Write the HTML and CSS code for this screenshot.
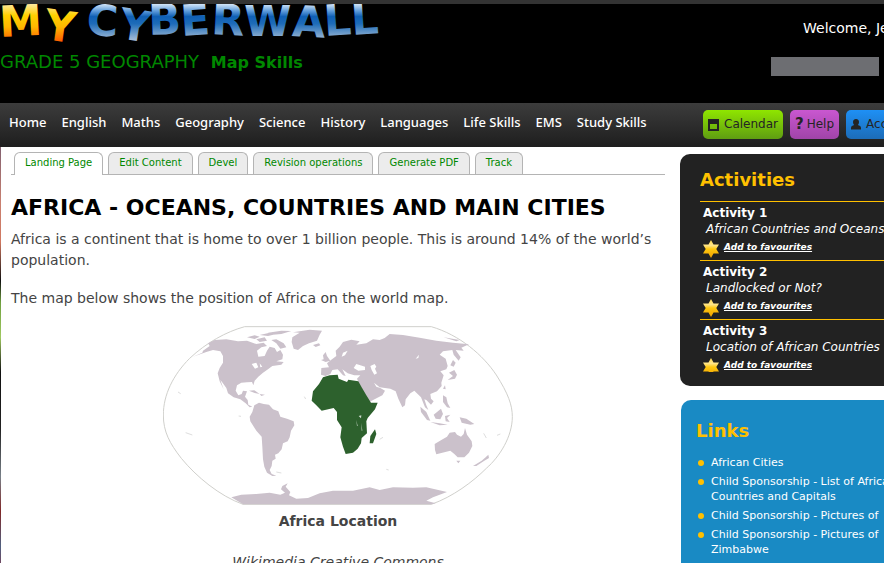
FILE: index.html
```html
<!DOCTYPE html>
<html lang="en">
<head>
<meta charset="utf-8">
<title>Africa - Oceans, Countries and Main Cities</title>
<link rel="stylesheet" href="styles.css">
</head>
<body>
<div class="page">
  <header class="header">
    <div class="brand">
      <a class="logo" href="#" aria-label="My Cyberwall">
        <svg width="384" height="43" viewBox="0 4 384 43">
          <defs>
            <linearGradient id="fire" gradientUnits="userSpaceOnUse" x1="0" y1="4" x2="0" y2="42"><stop offset="0" stop-color="#ffe9a0"/><stop offset=".3" stop-color="#ffd000"/><stop offset=".6" stop-color="#ffb800"/><stop offset="1" stop-color="#ff5a00"/></linearGradient>
            <linearGradient id="ice" gradientUnits="userSpaceOnUse" x1="0" y1="4" x2="0" y2="40"><stop offset="0" stop-color="#d4e6f8"/><stop offset=".2" stop-color="#5c9ada"/><stop offset=".35" stop-color="#0f5fb4"/><stop offset=".55" stop-color="#1e6cb8"/><stop offset="1" stop-color="#a4bcd6"/></linearGradient>
          </defs>
          <text class="logo-text" x="0" y="37 39" rotate="-3 8" fill="url(#fire)">MY</text>
          <text class="logo-text" x="86" y="35 38 35 36 34 36 36 36 35" rotate="3 9 -2 -4 3 0 3 -4 -4" fill="url(#ice)">CYBERWALL</text>
        </svg>
      </a>
      <p class="course">GRADE 5 GEOGRAPHY <strong>Map Skills</strong></p>
    </div>
    <div class="account">
      <p class="welcome">Welcome, Je</p>
      <input class="search" type="search" aria-label="Search">
    </div>
  </header>
  <div class="navbar">
    <nav class="menu">
      <a href="#">Home</a><a href="#">English</a><a href="#">Maths</a><a href="#">Geography</a><a href="#">Science</a><a href="#">History</a><a href="#">Languages</a><a href="#">Life Skills</a><a href="#">EMS</a><a href="#">Study Skills</a>
    </nav>
    <div class="tools">
      <a class="tool green" href="#"><svg width="11" height="12" viewBox="0 0 11 12"><path fill="#242424" fill-rule="evenodd" d="M0 0H11V12H0ZM2 5V10H9V5Z"/></svg>Calendar</a>
      <a class="tool purple" href="#"><b>?</b>Help</a>
      <a class="tool blue" href="#"><svg width="10" height="11" viewBox="0 0 10 11"><path fill="#242424" d="M5 0C7 0 8 1.400 8 3C8 4.500 7.300 5.500 6.800 6C8.500 6.500 10 7.200 10 9V10.500H0V9C0 7.200 1.500 6.500 3.200 6C2.700 5.500 2 4.500 2 3C2 1.400 3 0 5 0Z"/></svg>Account</a>
    </div>
  </div>
  <div class="body">
    <main class="main">
      <nav class="tabs">
        <a class="tab active" href="#">Landing Page</a><a class="tab" href="#">Edit Content</a><a class="tab" href="#">Devel</a><a class="tab" href="#">Revision operations</a><a class="tab" href="#">Generate PDF</a><a class="tab" href="#">Track</a>
      </nav>
      <h1>AFRICA - OCEANS, COUNTRIES AND MAIN CITIES</h1>
      <p>Africa is a continent that is home to over 1 billion people. This is around 14% of the world’s population.</p>
      <p>The map below shows the position of Africa on the world map.</p>
      <figure>
        <svg class="map" viewBox="10 18 1050 540" role="img" aria-label="World map with Africa highlighted">
          <path fill="#fff" stroke="#d0d0cc" stroke-width="3" d="M255 20H815C900 45 970 105 1010 165C1045 220 1058 255 1058 290C1058 350 1020 410 980 445C940 485 880 530 815 553H250C180 528 110 470 65 415C30 370 11 335 11 285C11 225 40 165 90 115C140 68 200 35 255 20Z"/>
          <g fill="#cbc1cb">
            <path d="M130 92L150 78L145 70L165 60L200 58L235 64L262 62L290 72L312 68L322 78L305 82L292 92L296 110L315 108L322 92L330 80L345 84L352 96L362 90L370 104L368 118L350 124L372 126L365 134L338 138L325 148L310 158L296 170L285 182L281 196L277 186L262 187L245 188L232 196L228 212L236 226L246 222L250 212L262 214L256 230L264 240L266 254L278 260L270 262L258 250L242 238L222 232L205 220L200 204L187 186L182 180L192 208L180 184L174 160L180 144L190 128L190 108L182 94L160 90L140 96L100 110L128 98Z"/>
            <path d="M262 52L285 46L300 50L285 57ZM290 58L315 52L322 62L300 66ZM300 45L330 38L350 42L325 48ZM325 38L365 32L395 33L365 42L340 44ZM335 60L350 58L372 70L380 82L362 86L350 70ZM398 52L420 38L400 37L450 29L487 32L480 44L472 62L448 70L430 78L415 90L402 86L396 66ZM460 75L478 70L482 76L468 81ZM268 212L284 211L300 222L285 219ZM300 222L316 224L305 228Z"/>
            <path d="M284 256L298 248L312 252L328 254L340 268L356 274L362 290L382 296L402 304L404 316L394 332L390 352L384 364L370 370L366 388L356 400L346 404L348 416L338 422L336 438L330 450L336 462L350 467L338 468L322 458L314 440L310 418L308 380L306 350L290 332L272 304L270 290L278 276Z"/>
            <path d="M484 164L485 144L508 142L502 130L514 120L530 108L528 92L540 80L550 66L575 59L600 64L590 74L620 70L640 58L660 60L675 54L690 42L730 45L780 53L830 62L880 68L928 73L905 83L912 92L888 90L903 112L897 122L882 104L878 90L850 94L840 104L858 116L864 138L860 148L842 154L852 166L845 188L846 198L832 214L812 222L814 236L822 244L814 254L800 240L794 238L800 256L806 270L796 262L784 232L774 222L764 212L752 220L738 238L736 256L728 262L716 236L708 214L692 206L660 202L643 188L650 200L662 204L676 212L668 226L636 242L630 246L614 220L598 190L592 176L602 166L584 166L564 160L548 148L558 168L550 166L534 148L518 150L512 162L498 168Z"/>
            <path d="M484 120L492 118L490 106L498 96L502 108L512 122L498 126ZM880 120L888 128L882 140L872 136ZM868 158L884 150L892 164L886 176L864 180L880 168ZM850 206L856 196L858 208ZM850 226L860 232L864 250L872 264L862 262L850 246ZM782 260L800 276L812 302L802 300L784 276ZM822 284L844 266L850 282L842 298L828 296ZM812 306L840 310L864 314L840 316ZM856 288L872 284L862 294L870 306L858 304ZM900 292L920 296L944 312L932 314L906 308ZM852 52L900 60L890 64Z"/>
            <path d="M825 372L845 360L862 350L870 338L886 336L892 344L904 350L912 342L916 324L922 344L936 364L938 378L928 398L914 412L894 412L884 402L872 392L848 398L830 403L826 390ZM890 422L902 422L896 430ZM940 438L966 422L978 412L986 404L988 414L974 422L950 438Z"/>
            <path d="M215 532L245 524L290 522L330 518L362 524L376 518L364 508L368 498L384 490L378 500L392 516L388 526L410 536L445 534L480 520L520 512L580 512L630 502L660 510L700 502L760 503L800 502L862 516L820 532L800 542L828 550L815 553H250Z"/>
          </g>
          <path fill="#fff" d="M582 144L590 132L602 136L616 140L616 150L596 152ZM632 138L645 132L650 140L646 146L652 160L644 164L636 150ZM550 98L564 92L556 106L546 110ZM768 116L778 104L776 114ZM276 132L290 128L296 142L286 146ZM300 130L308 140L302 142Z"/>
          <path fill="#2d612d" d="M490 172L510 166L534 164L537 176L562 186L566 179L596 184L606 202L620 226L634 248L654 248L646 268L624 294L620 304L622 340L606 354L604 370L594 386L580 398L558 402L550 380L542 352L546 322L532 300L532 276L522 264L486 272L470 256L456 242L460 214L478 192ZM646 328L650 342L640 370L630 370L632 348Z"/>
          <path fill="#cfdccf" d="M597 288L605 286L604 295ZM590 300L594 318L592 318ZM605 308L608 332L606 332Z"/>
          <path stroke="#dedede" stroke-width="3" fill="none" d="M55 216L63 221M237 288L244 289M78 338L98 345M434 230L438 237M660 358L670 352M680 448L687 450M972 340L980 354M1012 346L1022 342M350 456L365 459"/>
        </svg>
        <figcaption><strong>Africa Location</strong><em>Wikimedia Creative Commons</em></figcaption>
      </figure>
    </main>
    <aside class="side">
      <section class="panel activities">
        <h2>Activities</h2>
        <article><h3>Activity 1</h3><p>African Countries and Oceans</p><a href="#"><svg class="star" viewBox="0 0 16 18"><use href="#star"/></svg>Add to favourites</a></article>
        <article><h3>Activity 2</h3><p>Landlocked or Not?</p><a href="#"><svg class="star" viewBox="0 0 16 18"><use href="#star"/></svg>Add to favourites</a></article>
        <article><h3>Activity 3</h3><p>Location of African Countries</p><a href="#"><svg class="star cut" viewBox="0 0 16 18"><use href="#star"/></svg>Add to favourites</a></article>
      </section>
      <section class="panel links">
        <h2>Links</h2>
        <ul>
          <li><a href="#">African Cities</a></li>
          <li><a href="#">Child Sponsorship - List of African<br>Countries and Capitals</a></li>
          <li><a href="#">Child Sponsorship - Pictures of</a></li>
          <li><a href="#">Child Sponsorship - Pictures of<br>Zimbabwe</a></li>
        </ul>
      </section>
    </aside>
  </div>
</div>
<svg class="defs" width="0" height="0" aria-hidden="true">
  <defs>
    <linearGradient id="gold" x1="0" y1="0" x2="0" y2="1"><stop offset="0" stop-color="#ffd84a"/><stop offset=".3" stop-color="#ffe58a"/><stop offset=".5" stop-color="#ffc810"/><stop offset="1" stop-color="#efa000"/></linearGradient>
    <path id="star" fill="url(#gold)" d="M8 0L10.500 4.500H16L13.300 9L16 13.500H10.500L8 18L5.500 13.500H0L2.700 9L0 4.500H5.500Z"/>
  </defs>
</svg>
</body>
</html>
```
FILE: styles.css
```css
* { box-sizing: border-box; }
body {
  margin: 0;
  overflow: hidden;
  background: #fff;
  color: #444;
  font: 14px/21px "DejaVu Sans", Verdana, sans-serif;
}
h1, h2, h3, p, ul, figure { margin: 0; padding: 0; }
a { color: inherit; text-decoration: none; }
.page { min-width: 940px; }
.defs { display: block; }

.header {
  display: flex;
  justify-content: space-between;
  height: 103px;
  border-top: 4px solid #333;
  background: #000;
}
.logo, .logo svg { display: block; }
.logo-text { font: bold 43px "DejaVu Sans", Verdana, sans-serif; }
.course { color: #080; font-size: 18px; line-height: 30px; }
.course strong { margin-left: 6px; font-size: 16px; }
.account { width: 169px; }
.welcome {
  padding: 13px 0 0 32px;
  color: #fff;
  line-height: 22px;
}
.search {
  display: block;
  width: 108px;
  height: 19px;
  margin-top: 18px;
  border: 0;
  background: #6d6e72;
}

.navbar {
  display: flex;
  height: 44px;
  padding: 0 0 0 9px;
  background: linear-gradient(#3c3c3c, #1e1e1e);
}
.menu {
  display: flex;
  flex: 1;
  gap: 15px;
  color: #fff;
  font: 500 13px/38px "Noto Sans", "DejaVu Sans", sans-serif;
  white-space: nowrap;
}
.tools {
  display: flex;
  gap: 7px;
  width: 237px;
  padding-top: 7px;
}
.tool {
  display: flex;
  align-items: center;
  height: 29px;
  padding: 0 5px;
  border-radius: 5px;
  color: #242424;
  font-size: 12px;
  gap: 5px;
  flex: none;
}
.tool b { font-size: 15px; }
.green { background: linear-gradient(#8fe600, #5f9d12); }
.purple { gap: 3px; background: linear-gradient(#c957d0, #a044a8); }
.blue { background: linear-gradient(#1e90f5, #1c6cb8); }

.body {
  display: grid;
  grid-template-columns: 1fr 260px;
  gap: 15px;
}
.main {
  padding-left: 10px;
  border-left: 1px solid;
  border-image: linear-gradient(#806070, #c98070 13%, #d07860 22%, #101010 31%, #70a040 36%, #a0c860 44%, #101010 52%, #222 65%, #788088 76%, #802828 84%, #506080 92%, #903040) 1;
}
.tabs {
  display: flex;
  gap: 5px;
  padding: 5px 0 0 3px;
  border-bottom: 1px solid #b4b4b4;
  color: #080;
  font-size: 10px;
  line-height: 20px;
}
.tab {
  height: 22px;
  padding: 0 10px;
  border: 1px solid #b4b4b4;
  border-bottom: 0;
  border-radius: 6px 6px 0 0;
  background: #ececec;
}
.active { height: 23px; margin-bottom: -1px; background: #fff; }
h1 {
  padding: 18px 0 6px;
  color: #000;
  font-size: 22px;
  line-height: 30px;
  white-space: nowrap;
}
.main > p { padding-bottom: 17px; }
figure { text-align: center; }
.map { display: block; width: 350px; height: 180px; margin: 0 auto; }
figcaption { line-height: 21px; padding-top: 5px; }
figcaption strong, figcaption em { display: block; }
figcaption em { padding-top: 20px; }

.side { padding-top: 7px; white-space: nowrap; }
.panel { border-radius: 10px; color: #fff; }
h2 { color: #ffc000; font-size: 18px; line-height: 24px; }
.activities { height: 232px; padding: 14px 0 0 20px; background: #222; }
.activities h2 { padding-bottom: 9px; }
article { height: 59px; padding: 3px 0 0 3px; border-top: 1px solid #ffc000; }
h3 { font-size: 12px; line-height: 16px; }
article p { padding-left: 3px; font-size: 12px; font-style: italic; line-height: 16px; }
article a {
  display: flex;
  gap: 5px;
  height: 18px;
  font-size: 9px;
  font-weight: bold;
  font-style: italic;
  line-height: 20px;
  text-decoration: underline;
}
.star { width: 16px; height: 18px; margin-top: 3px; }
.cut { clip-path: inset(0 0 4px 0); }
.links { min-height: 180px; margin: 14px 0 0 1px; padding: 19px 0 0 15px; background: #198ac4; }
ul { list-style: none; padding-top: 12px; font-size: 11px; line-height: 15px; }
li { display: flex; gap: 7px; padding-bottom: 4px; }
li::before {
  content: "";
  width: 6px;
  height: 6px;
  margin: 5px 0 0 2px;
  border-radius: 50%;
  background: #ffc000;
}
```
